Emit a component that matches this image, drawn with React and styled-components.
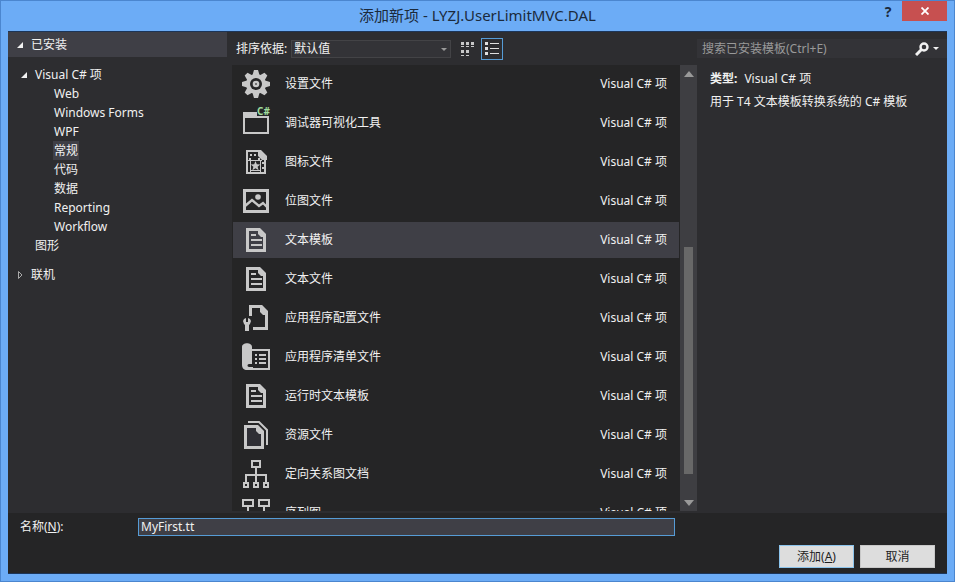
import React from 'react'
import styled, { createGlobalStyle } from 'styled-components'

const treeItems = [
   'Web',
   'Windows Forms',
   'WPF',
   '常规',
   '代码',
   '数据',
   'Reporting',
   'Workflow',
]

const GearIcon = () => (
   <Icon viewBox="0 0 28 28">
      <g fill="#c8c8c8">
         {[0, 45, 90, 135].map((angle) => (
            <path
               key={angle}
               d="M12 0h4l1.500 5v18l-1.500 5h-4l-1.500-5v-18z"
               transform={`rotate(${angle} 14 14)`}
            />
         ))}
         <circle cx="14" cy="14" r="10" />
      </g>
      <circle cx="14" cy="14" r="6" fill="#252526" />
      <circle cx="14" cy="14" r="3.300" fill="#c8c8c8" />
      <circle cx="14" cy="14" r="1" fill="#555" />
   </Icon>
)

const VisualizerIcon = () => (
   <Icon viewBox="0 0 28 28">
      <path
         d="M1 3h14v4h12v18H1zM3 9v14h22V9z"
         fill="#c8c8c8"
         fillRule="evenodd"
      />
      <text
         x="15"
         y="6"
         fill="#9fdc9c"
         fontSize="10"
         fontWeight="700"
         fontFamily="Noto Sans, sans-serif"
      >
         C#
      </text>
   </Icon>
)

const IconFileIcon = () => (
   <Icon viewBox="0 0 28 28">
      <path d="M5 3h12l6 6v16H5z" stroke="#c8c8c8" strokeWidth="2" />
      <path d="M16 2h3l6 6v4h-5l-4-4z" fill="#c8c8c8" />
      <path
         d="M8 6h2v2H8zM12 6h2v2h-2zM7 10h2v2H7zM16 10h2v2h-2zM6 12h14v1H6zM18 12h1v12h-1zM8 12h1v12H8zM8 22h11v1H8zM20 14h3v2h-3zM20 19h3v2h-3z"
         fill="#c8c8c8"
      />
      <path
         d="M13.500 13l1.300 3.300 3.500.2-2.700 2.200 1 3.500-3.100-2-3.100 2 1-3.500-2.700-2.200 3.500-.2z"
         fill="#c8c8c8"
      />
   </Icon>
)

const BitmapIcon = () => (
   <Icon viewBox="0 0 28 28">
      <path d="M2.500 3.500h23v21h-23z" stroke="#c8c8c8" strokeWidth="3" />
      <circle cx="16" cy="10" r="2.800" fill="#c8c8c8" />
      <path d="M3 19l7-6 7 6 4-3 5 5" stroke="#c8c8c8" strokeWidth="2.400" />
   </Icon>
)

const TextIcon = () => (
   <Icon viewBox="0 0 28 28">
      <path d="M5.500 3.500h11l6 6v15h-17z" stroke="#c8c8c8" strokeWidth="3" />
      <path d="M16 2h2l6 6v3h-5l-3-3z" fill="#c8c8c8" />
      <path d="M9 9h5M9 14h11M9 19h11" stroke="#c8c8c8" strokeWidth="2" />
   </Icon>
)

const ConfigIcon = () => (
   <Icon viewBox="0 0 28 28">
      <path
         d="M8.500 12V2.500H19l5.500 6v16H11"
         stroke="#c8c8c8"
         strokeWidth="3"
      />
      <path d="M18 1h2l6 6v4h-5l-3-3z" fill="#c8c8c8" />
      <path
         d="M2 15l2-1v4h2v-4l2 1 1 2-1 3-1 1v6H3v-6l-1-1-1-3z"
         fill="#c8c8c8"
      />
   </Icon>
)

const ManifestIcon = () => (
   <Icon viewBox="0 0 28 28">
      <path d="M10 7h17v19H6" stroke="#c8c8c8" strokeWidth="2" />
      <path
         d="M0 4c0-5 10-5 10 0v17H7c-2 0-2 3 0 3h4v3H5c-3 0-5-2-5-5z"
         fill="#c8c8c8"
      />
      <path
         d="M13 12h2M17 12h7M13 16h2M17 16h7M13 20h2M17 20h7"
         stroke="#c8c8c8"
         strokeWidth="2"
      />
   </Icon>
)

const ResourceIcon = () => (
   <Icon viewBox="0 0 28 28">
      <path d="M6 1h11l8 8v15" stroke="#c8c8c8" strokeWidth="2" />
      <path
         d="M3.500 5.500h11l6 6v15h-17z"
         fill="#2f2f35"
         stroke="#c8c8c8"
         strokeWidth="3"
      />
      <path d="M14 4h2l6 6v3h-5l-3-3z" fill="#c8c8c8" />
   </Icon>
)

const GraphIcon = () => (
   <Icon viewBox="0 0 28 28">
      <path
         d="M10 1h8v6h-8zM14 7v16M4 22v-7h20v7M2 23h4v4H2zM12 23h4v4h-4zM22 23h4v4h-4z"
         stroke="#c8c8c8"
         strokeWidth="2"
      />
   </Icon>
)

const SequenceIcon = () => (
   <Icon viewBox="0 0 28 28">
      <path
         d="M1 1h10v6H1zM17 1h10v6H17zM6 7v20M22 7v20M6 14h16"
         stroke="#c8c8c8"
         strokeWidth="2"
      />
   </Icon>
)

const templates = [
   { name: '设置文件', icon: GearIcon },
   { name: '调试器可视化工具', icon: VisualizerIcon },
   { name: '图标文件', icon: IconFileIcon },
   { name: '位图文件', icon: BitmapIcon },
   { name: '文本模板', icon: TextIcon, selected: true },
   { name: '文本文件', icon: TextIcon },
   { name: '应用程序配置文件', icon: ConfigIcon },
   { name: '应用程序清单文件', icon: ManifestIcon },
   { name: '运行时文本模板', icon: TextIcon },
   { name: '资源文件', icon: ResourceIcon },
   { name: '定向关系图文档', icon: GraphIcon },
   { name: '序列图', icon: SequenceIcon },
]

const App = () => {
   return (
      <Window>
         <GlobalStyle />
         <TitleBar>
            <Title>添加新项 - LYZJ.UserLimitMVC.DAL</Title>
            <TitleButtons>
               <HelpButton>?</HelpButton>
               <CloseButton aria-label="关闭">
                  <svg width="8" height="8" viewBox="0 0 8 8">
                     <path d="M0.500 0.500l7 7M7.500 0.500l-7 7" stroke="#fff" strokeWidth="1.800" />
                  </svg>
               </CloseButton>
            </TitleButtons>
         </TitleBar>
         <Content>
            <Sidebar>
               <Installed>
                  <Arrow open />
                  已安装
               </Installed>
               <Tree>
                  <Branch>
                     <Arrow open />
                     Visual C# 项
                  </Branch>
                  {treeItems.map((item) => (
                     <Leaf key={item}>
                        <LeafButton $selected={item === '常规'}>{item}</LeafButton>
                     </Leaf>
                  ))}
                  <Leaf $top>
                     <LeafButton>图形</LeafButton>
                  </Leaf>
               </Tree>
               <Online>
                  <Arrow />
                  联机
               </Online>
            </Sidebar>
            <Center>
               <Toolbar>
                  <label htmlFor="sort">排序依据:</label>
                  <SelectBox>
                     <Select id="sort">
                        <option>默认值</option>
                     </Select>
                     <SelectArrow width="6" height="3" viewBox="0 0 6 3">
                        <path d="M0 0h6L3 3z" fill="#999" />
                     </SelectArrow>
                  </SelectBox>
                  <ViewButton aria-label="小图标">
                     <svg width="14" height="14" viewBox="0 0 14 14">
                        <path
                           d="M0 0h3v3H0zM5 0h3v3H5zM10 0h3v3h-3zM0 4h3v1H0zM5 4h3v1H5zM10 4h3v1h-3zM0 8h3v3H0zM5 8h3v3H5zM0 13h3v1H0zM5 13h3v1H5z"
                           fill="#c8c8c8"
                        />
                     </svg>
                  </ViewButton>
                  <ViewButton $active aria-label="列表">
                     <svg width="14" height="14" viewBox="0 0 14 14">
                        <path
                           d="M0 0h3v3H0zM5 1h9v1H5zM0 5h3v3H0zM5 6h9v1H5zM0 10h3v3H0zM5 11h9v1H5z"
                           fill="#e0e0e0"
                        />
                     </svg>
                  </ViewButton>
               </Toolbar>
               <ListArea>
                  <List>
                     {templates.map(({ name, icon: RowIcon, selected }) => (
                        <Row key={name} $selected={selected}>
                           <RowIcon />
                           <Name>{name}</Name>
                           <Language>Visual C# 项</Language>
                        </Row>
                     ))}
                  </List>
                  <ScrollBar>
                     <svg width="10" height="6" viewBox="0 0 10 6">
                        <path d="M5 0l5 6H0z" fill="#999" />
                     </svg>
                     <Track>
                        <Thumb />
                     </Track>
                     <svg width="10" height="6" viewBox="0 0 10 6">
                        <path d="M0 0h10L5 6z" fill="#999" />
                     </svg>
                  </ScrollBar>
               </ListArea>
            </Center>
            <Details>
               <SearchBox>
                  <SearchInput
                     aria-label="搜索已安装模板"
                     placeholder="搜索已安装模板(Ctrl+E)"
                  />
                  <SearchButton aria-label="搜索">
                     <svg width="24" height="14" viewBox="0 0 24 14">
                        <circle cx="9" cy="5" r="3.500" stroke="#f1f1f1" strokeWidth="2.400" fill="none" />
                        <path d="M6.500 7.500L1 13" stroke="#f1f1f1" strokeWidth="3" />
                        <path d="M18 5h6l-3 3z" fill="#f1f1f1" />
                     </svg>
                  </SearchButton>
               </SearchBox>
               <Info>
                  <p>
                     <b>类型:</b>Visual C# 项
                  </p>
                  <p>用于 T4 文本模板转换系统的 C# 模板</p>
               </Info>
            </Details>
         </Content>
         <Footer>
            <NameRow>
               <label htmlFor="name">
                  名称(<u>N</u>):
               </label>
               <NameInput id="name" defaultValue="MyFirst.tt" />
            </NameRow>
            <Actions>
               <Button $primary>
                  添加(<u>A</u>)
               </Button>
               <Button>取消</Button>
            </Actions>
         </Footer>
      </Window>
   )
}

const Arrow = ({ open }) => (
   <ArrowSvg width="8" height="8" viewBox="0 0 8 8">
      {open ? (
         <path d="M7 1v6H1z" fill="#f1f1f1" />
      ) : (
         <path d="M2.500 0.500v7L6 4z" stroke="#aaa" fill="none" />
      )}
   </ArrowSvg>
)

export default App

const GlobalStyle = createGlobalStyle`
   * {
      box-sizing: border-box;
   }
   body {
      margin: 0;
      color: #f1f1f1;
      font-family: 'Noto Sans', 'Noto Sans CJK SC', sans-serif;
      font-size: 12px;
      line-height: 19px;
   }
   button, input, select {
      font: inherit;
      color: inherit;
      border: none;
      padding: 0;
   }
   ul, p {
      list-style: none;
      margin: 0;
      padding: 0;
   }
`
const Window = styled.div`
   display: flex;
   flex-direction: column;
   height: 100vh;
   padding: 0 7px 7px;
   background: #6cacf6;
   border: 1px solid #4b86cf;
`
const TitleBar = styled.header`
   display: grid;
   grid-template-columns: 1fr auto 1fr;
   height: 30px;
   flex: none;
   color: #1b2a3c;
`
const Title = styled.h1`
   grid-column: 2;
   margin: 0;
   font-size: 15px;
   font-weight: 400;
   line-height: 28px;
`
const TitleButtons = styled.div`
   display: flex;
   justify-content: flex-end;
   align-items: flex-start;
`
const HelpButton = styled.button`
   width: 28px;
   height: 21px;
   background: none;
   font-size: 14px;
   font-weight: 700;
   line-height: 21px;
`
const CloseButton = styled.button`
   display: flex;
   align-items: center;
   justify-content: center;
   width: 45px;
   height: 20px;
   background: #c75050;
`
const Content = styled.main`
   display: flex;
   flex: 1;
   min-height: 0;
   background: #2d2d30;
   border-top: 1px solid #1c3558;
`
const Sidebar = styled.nav`
   width: 219px;
   margin-right: 5px;
`
const Installed = styled.div`
   display: flex;
   align-items: center;
   gap: 7px;
   height: 25px;
   padding-left: 8px;
   background: #3f3f46;
`
const Tree = styled.ul`
   padding: 8px 0 10px 12px;
`
const Branch = styled.li`
   display: flex;
   align-items: center;
   gap: 7px;
`
const Leaf = styled.li`
   height: 19px;
   padding-left: ${({ $top }) => ($top ? '14px' : '33px')};
`
const LeafButton = styled.button`
   height: 19px;
   padding: 0 1px;
   background: ${({ $selected }) => ($selected ? '#3f3f46' : 'none')};
`
const Online = styled.div`
   display: flex;
   align-items: center;
   gap: 7px;
   padding-left: 8px;
`
const ArrowSvg = styled.svg`
   flex: none;
`
const Center = styled.section`
   display: flex;
   flex: 1;
   flex-direction: column;
   min-width: 0;
`
const Toolbar = styled.div`
   display: flex;
   align-items: center;
   height: 33px;
   flex: none;
   padding-left: 4px;
   gap: 4px;
`
const SelectBox = styled.div`
   position: relative;
   width: 160px;
   margin-right: 4px;
`
const Select = styled.select`
   display: block;
   appearance: none;
   width: 100%;
   height: 18px;
   padding: 0 0 2px 2px;
   line-height: 16px;
   background: #333337;
   border: 1px solid #434346;
`
const SelectArrow = styled.svg`
   position: absolute;
   right: 4px;
   top: 8px;
   pointer-events: none;
`
const ViewButton = styled.button`
   display: flex;
   align-items: center;
   justify-content: center;
   width: 22px;
   height: 22px;
   margin-left: -2px;
   background: none;
   border: 1px solid ${({ $active }) => ($active ? '#569cd6' : 'transparent')};
`
const ListArea = styled.div`
   display: flex;
   flex: 1;
   min-height: 0;
   margin-bottom: 2px;
   background: #252526;
`
const List = styled.ul`
   display: flex;
   flex: 1;
   flex-direction: column;
   gap: 3px;
   padding: 1px 1px 0;
   overflow: hidden;
`
const Row = styled.li`
   display: flex;
   align-items: center;
   flex: none;
   height: 36px;
   padding: 0 12px 0 9px;
   gap: 15px;
   background: ${({ $selected }) => ($selected ? '#3f3f46' : 'none')};
`
const Icon = styled.svg`
   width: 28px;
   height: 28px;
   flex: none;
   fill: none;
   overflow: visible;
`
const Name = styled.span`
   flex: 1;
   padding-bottom: 2px;
`
const Language = styled.span`
   flex: none;
   padding-bottom: 2px;
`
const ScrollBar = styled.div`
   display: flex;
   flex-direction: column;
   align-items: center;
   gap: 5px;
   width: 17px;
   padding: 6px 0 5px;
   background: #3e3e42;
`
const Track = styled.div`
   display: flex;
   flex: 1;
   align-items: flex-end;
   padding-bottom: 21px;
`
const Thumb = styled.div`
   width: 9px;
   height: 58%;
   background: #686868;
`
const Details = styled.aside`
   width: 250px;
`
const SearchBox = styled.div`
   display: flex;
   align-items: center;
   height: 33px;
`
const SearchInput = styled.input`
   flex: 1;
   min-width: 0;
   height: 19px;
   padding: 0 0 1px 5px;
   background: #333337;
   &::placeholder {
      color: #999999;
   }
`
const SearchButton = styled.button`
   display: flex;
   align-items: center;
   height: 19px;
   padding: 0 8px 0 2px;
   background: #333337;
`
const Info = styled.div`
   display: flex;
   flex-direction: column;
   gap: 4px;
   padding: 4px 13px;
   b {
      margin-right: 7px;
   }
`
const Footer = styled.footer`
   flex: none;
   padding: 4px 12px 5px;
   background: #252526;
   border-bottom: 1px solid #1c3558;
`
const NameRow = styled.div`
   display: flex;
   align-items: center;
   label {
      width: 118px;
   }
`
const NameInput = styled.input`
   flex: 1;
   height: 18px;
   margin-right: 260px;
   padding-left: 2px;
   background: #3f3f46;
   border: 1px solid #569cd6;
`
const Actions = styled.div`
   display: flex;
   justify-content: flex-end;
   gap: 6px;
   margin-top: 9px;
`
const Button = styled.button`
   width: 75px;
   height: 23px;
   line-height: 19px;
   color: #1e1e1e;
   background: #dddddd;
   border: 1px solid ${({ $primary }) => ($primary ? '#8cc4ec' : '#c8c8c8')};
`
